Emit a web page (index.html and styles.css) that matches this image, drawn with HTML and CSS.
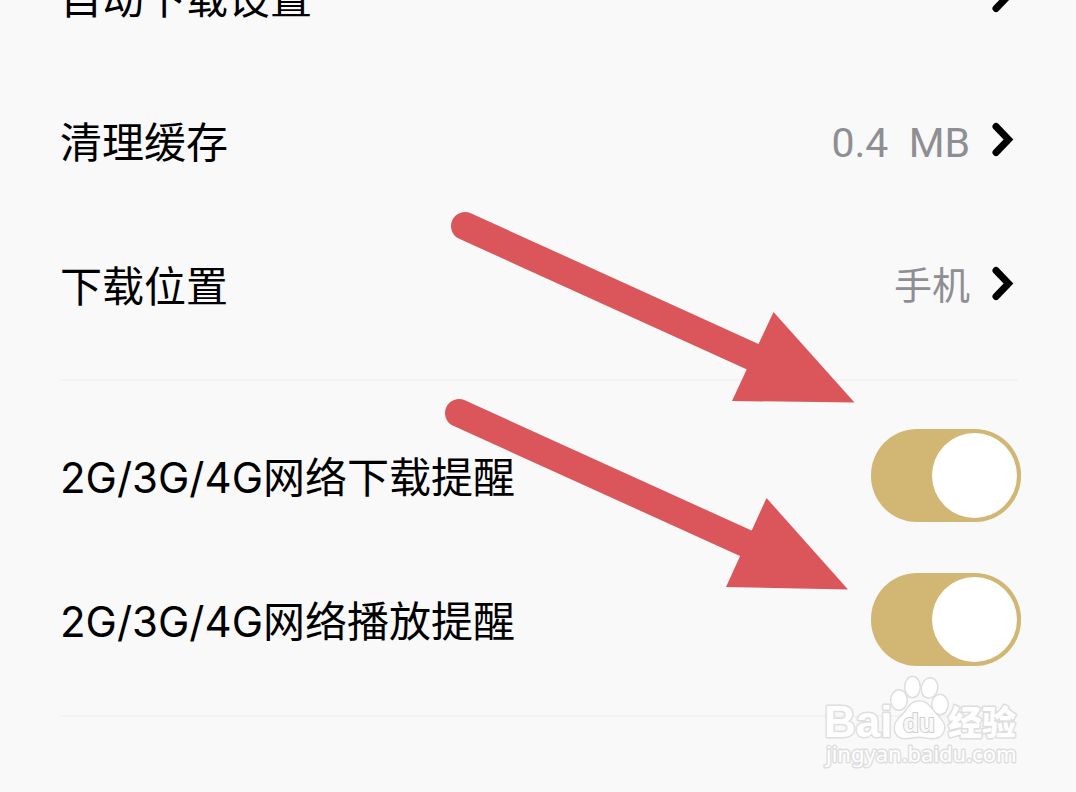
FILE: index.html
```html
<!DOCTYPE html>
<html lang="zh-CN">
<head>
<meta charset="utf-8">
<meta name="viewport" content="width=device-width, initial-scale=1">
<title>下载设置</title>
<link rel="stylesheet" href="styles.css">
</head>
<body>
<main class="settings">
  <section class="group">
    <button class="row row-link" type="button">
      <span class="label">自动下载设置</span>
      <svg class="chevron" viewBox="0 0 22 34" aria-hidden="true"><path d="M4 3.500 16.500 16.500 4 29.500"/></svg>
    </button>
    <button class="row row-link" type="button">
      <span class="label">清理缓存</span>
      <span class="value value-size">0.4  MB</span>
      <svg class="chevron" viewBox="0 0 22 34" aria-hidden="true"><path d="M4 3.500 16.500 16.500 4 29.500"/></svg>
    </button>
    <button class="row row-link" type="button">
      <span class="label">下载位置</span>
      <span class="value">手机</span>
      <svg class="chevron" viewBox="0 0 22 34" aria-hidden="true"><path d="M4 3.500 16.500 16.500 4 29.500"/></svg>
    </button>
  </section>
  <section class="group">
    <div class="row row-switch">
      <label class="label" for="download-alert">2G/3G/4G网络下载提醒</label>
      <input class="switch" id="download-alert" type="checkbox" role="switch" checked>
    </div>
    <div class="row row-switch">
      <label class="label" for="play-alert">2G/3G/4G网络播放提醒</label>
      <input class="switch" id="play-alert" type="checkbox" role="switch" checked>
    </div>
  </section>
</main>

<svg class="arrows" width="1076" height="792" viewBox="0 0 1076 792" aria-hidden="true">
  <path class="shaft" d="M465 226 760 360"/>
  <path class="head" d="M773.5 312 854.5 402.5 732 401Z"/>
  <path class="shaft" d="M459 413 754 547"/>
  <path class="head" d="M766.5 498 848 589.5 726 587Z"/>
</svg>

<svg class="watermark" width="204" height="100" viewBox="0 0 204 100" role="img" aria-label="Baidu 经验">
  <text class="mark mark-bai" x="4" y="62">Bai</text>
  <g class="paw">
    <ellipse cx="79" cy="25" rx="7.5" ry="9.5"/>
    <ellipse cx="92.500" cy="12" rx="7" ry="10"/>
    <ellipse cx="109.500" cy="13" rx="7.500" ry="9.500" transform="rotate(12 109.500 13)"/>
    <ellipse cx="120" cy="29.500" rx="7.500" ry="9.500"/>
    <path d="M99 26.500C92 26.500 89 32 85.500 37 81 42 75 46 75 53 75 60 80 63.500 86 63 92 62.500 95 61.500 99 61.500S107 63 113 63C119 63 124 59 124 52 124 46 118 42 113.500 36.500 109 31 106 26.500 99 26.500Z"/>
  </g>
  <text class="mark mark-du" x="83" y="57">du</text>
  <text class="mark mark-cjk" x="128" y="60">经验</text>
  <text class="mark mark-url" x="6" y="87">jingyan.baidu.com</text>
</svg>
</body>
</html>
```
FILE: styles.css
```css
* {
  box-sizing: border-box;
}

body {
  position: relative;
  height: 100vh;
  margin: 0;
  overflow: hidden;
  background: #f9f9f9;
  color: #000;
  font-family: Inter, "Noto Sans CJK SC", sans-serif;
}

.settings {
  margin-top: -99px;
  padding: 0 58px 0 60px;
}

.group {
  padding: 23px 0;
  border-bottom: 2px solid #f3f3f3;
}

.row {
  display: flex;
  align-items: center;
  width: 100%;
  height: 144px;
  border: 0;
  background: none;
  color: inherit;
  font: inherit;
  text-align: left;
}

.row-link {
  padding: 0 4px 0 0;
}

.row-switch {
  width: auto;
  margin-right: -3px;
  padding-bottom: 2px;
}

.label {
  flex: 1;
  padding-top: 6px;
  font-size: 42px;
  line-height: 60px;
}

.value {
  padding-top: 2px;
  color: #8e8e93;
  font-size: 38px;
  line-height: 60px;
  white-space: pre;
}

.value-size {
  padding-top: 6px;
  font-family: Roboto, sans-serif;
  font-size: 41px;
}

.chevron {
  width: 22px;
  height: 34px;
  margin-left: 22px;
  overflow: visible;
  fill: none;
  stroke: #000;
  stroke-width: 7;
  stroke-linecap: round;
}

.switch {
  display: flex;
  justify-content: flex-end;
  width: 150px;
  height: 93px;
  margin: 0;
  padding: 4px;
  appearance: none;
  border-radius: 46px;
  background: #d2b674;
}

.switch::before {
  width: 85px;
  height: 85px;
  border-radius: 50%;
  background: #fff;
  content: "";
}

.switch:not(:checked) {
  justify-content: flex-start;
  background: #d8d8d8;
}

.arrows {
  position: absolute;
  top: 0;
  left: 0;
  pointer-events: none;
}

.shaft {
  stroke: #db565b;
  stroke-width: 28;
  stroke-linecap: round;
}

.head {
  fill: #db565b;
}

.watermark {
  position: absolute;
  right: 52px;
  bottom: 17px;
  pointer-events: none;
}

.mark,
.paw {
  fill: #fff;
  stroke: #dedede;
  stroke-width: 3;
  stroke-linejoin: round;
  paint-order: stroke;
}

.mark-bai {
  font: bold 44px "Liberation Sans", sans-serif;
}

.mark-du {
  fill: #f9f9f9;
  stroke: #cfcfcf;
  stroke-width: 2;
  font: bold 26px "Liberation Sans", sans-serif;
}

.mark-cjk {
  font: 900 34px "Noto Sans CJK SC", sans-serif;
}

.mark-url {
  font: 22px "Noto Sans", sans-serif;
}
```
